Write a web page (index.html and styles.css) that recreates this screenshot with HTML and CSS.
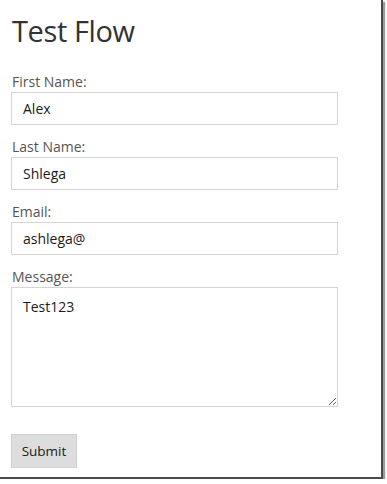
FILE: index.html
```html
<!DOCTYPE html>
<html lang="en">
<head>
  <meta charset="UTF-8">
  <title>Test Flow</title>
  <link rel="stylesheet" href="styles.css">
</head>
<body>
  <div class="frame">
    <h1>Test Flow</h1>

    <form class="flow-form">
      <label for="first">First Name:</label>
      <input type="text" id="first" value="Alex">

      <label for="last">Last Name:</label>
      <input type="text" id="last" value="Shlega">

      <label for="email">Email:</label>
      <input type="text" id="email" value="ashlega@">

      <label for="message">Message:</label>
      <textarea id="message">Test123</textarea>

      <button type="button">Submit</button>
    </form>
  </div>
</body>
</html>
```

FILE: styles.css
```css
* {
  box-sizing: border-box;
}

html, body {
  margin: 0;
  padding: 0;
  background: #fff;
}

body {
  font-family: "Open Sans", "Noto Sans", sans-serif;
  color: #222;
}

.frame {
  width: 383px;
  height: 479px;
  padding: 0 11px;
  border-right: 2px solid #4a4a4a;
  border-bottom: 2px solid #4a4a4a;
  box-shadow: 2px 2px 1px #9a9a9a;
  overflow: hidden;
}

h1 {
  font-size: 29px;
  font-weight: 400;
  color: #333;
  margin: 0;
  padding: 13px 0 0 1px;
  line-height: 36px;
  letter-spacing: -0.4px;
}

.flow-form {
  display: flex;
  flex-direction: column;
  margin-top: 24px;
}

.flow-form label {
  font-size: 14px;
  color: #555;
  line-height: 18px;
  padding-left: 1px;
  margin-bottom: 1px;
}

.flow-form input,
.flow-form textarea {
  width: 327px;
  height: 33px;
  margin: 0 0 13px;
  padding: 0 11px;
  font-family: inherit;
  font-size: 14px;
  color: #1a1a1a;
  border: 1px solid #d4d4d4;
  outline: none;
}

.flow-form textarea {
  height: 120px;
  padding-top: 9px;
  resize: vertical;
}

.flow-form button {
  align-self: flex-start;
  width: 66px;
  height: 34px;
  margin-top: 14px;
  padding: 0;
  font-family: inherit;
  font-size: 13.5px;
  color: #1a1a1a;
  background: #ddd;
  border: 1px solid #d0d0d0;
}
```
